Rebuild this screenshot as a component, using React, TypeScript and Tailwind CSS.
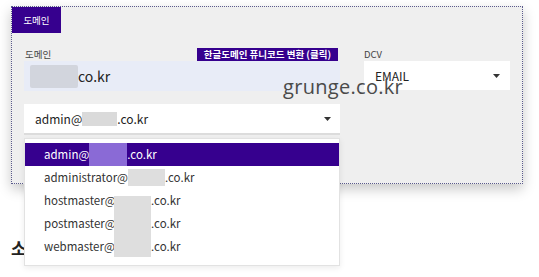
import React from "react";

const emails = ["hostmaster@", "postmaster@", "webmaster@"];

function Caret() {
  return (
    <svg width="7" height="4" viewBox="0 0 7 4" className="shrink-0">
      <path d="M0 0h7L3.5 4z" fill="#333" />
    </svg>
  );
}

export default function App() {
  return (
    <div className="relative min-h-screen bg-white pl-[11px] pt-[6px] font-['Noto_Sans_CJK_KR','Noto_Sans',sans-serif] text-[#222]">
      <div className="relative h-[178px] w-[512px] border border-dotted border-[#5b5b8c] bg-[#efefef] shadow-[0_5px_12px_rgba(0,0,0,0.22)]">
        <div className="flex h-[26px] w-[49px] items-center justify-center bg-[#36008e] text-[9.5px] text-white">
          도메인
        </div>

        <div className="flex gap-[24px] pl-[12px] pt-[14px]">
          {/* left column */}
          <div className="relative w-[316px]">
            <div className="flex h-[14px] items-center justify-between">
              <span className="pl-[1px] text-[9.5px] text-[#444]">도메인</span>
              <button className="mr-[2px] flex h-[13px] items-center bg-[#36008e] px-[7px] text-[9.5px] font-bold text-white">
                한글도메인 퓨니코드 변환 (클릭)
              </button>
            </div>
            <div className="flex h-[30px] items-center bg-[#e8ecf7] pl-[6px] text-[14px] text-[#222]">
              <span className="h-[23px] w-[48px] rounded-[2px] bg-[#d2d5dd]" />
              <span>co.kr</span>
            </div>

            <div className="mt-[13px] flex h-[31px] items-center justify-between border-b-2 border-[#dcdcdc] bg-white pl-[11px] pr-[9px] text-[12px]">
              <span className="flex items-center">
                admin@
                <span className="inline-block h-[14px] w-[35px] bg-[#dadada]" />
                .co.kr
              </span>
              <Caret />
            </div>

            {/* open dropdown list */}
            <div className="absolute left-0 top-[91px] z-10 w-[316px] border border-[#e2e2e2] bg-white pb-[7px] pt-[4px] text-[11.5px] text-[#333] shadow-[0_2px_6px_rgba(0,0,0,0.08)]">
              <div className="flex h-[23px] items-center bg-[#36008e] pl-[19px] text-white">
                admin@
                <span className="inline-block h-[23px] w-[38px] bg-[#8a6ad6]" />
                .co.kr
              </div>
              <div className="flex h-[23px] items-center pl-[19px]">
                administrator@
                <span className="inline-block h-[17px] w-[37px] bg-[#dedede]" />
                .co.kr
              </div>
              {emails.map((e) => (
                <div key={e} className="flex h-[23px] items-center pl-[19px]">
                  <span className="w-[70px]">{e}</span>
                  <span className="inline-block w-[37px]" />
                  .co.kr
                </div>
              ))}
              <div className="absolute left-[89px] top-[57px] h-[61px] w-[37px] bg-[#dedede]" />
            </div>
          </div>

          {/* right column */}
          <div className="w-[146px]">
            <div className="flex h-[14px] items-center text-[9.5px] text-[#444]">DCV</div>
            <div className="flex h-[29px] items-center justify-between bg-white pl-[11px] pr-[10px] text-[12px] text-[#222]">
              <span>EMAIL</span>
              <Caret />
            </div>
          </div>
        </div>
      </div>

      <h2 className="mt-[52px] text-[17px] font-bold leading-[24px] text-[#222]">소</h2>

      <div className="absolute left-[283px] top-[74px] font-['Open_Sans',sans-serif] text-[20px] leading-[26px] tracking-[0.3px] text-[#4a4a4a]">
        grunge.co.kr
      </div>
    </div>
  );
}
